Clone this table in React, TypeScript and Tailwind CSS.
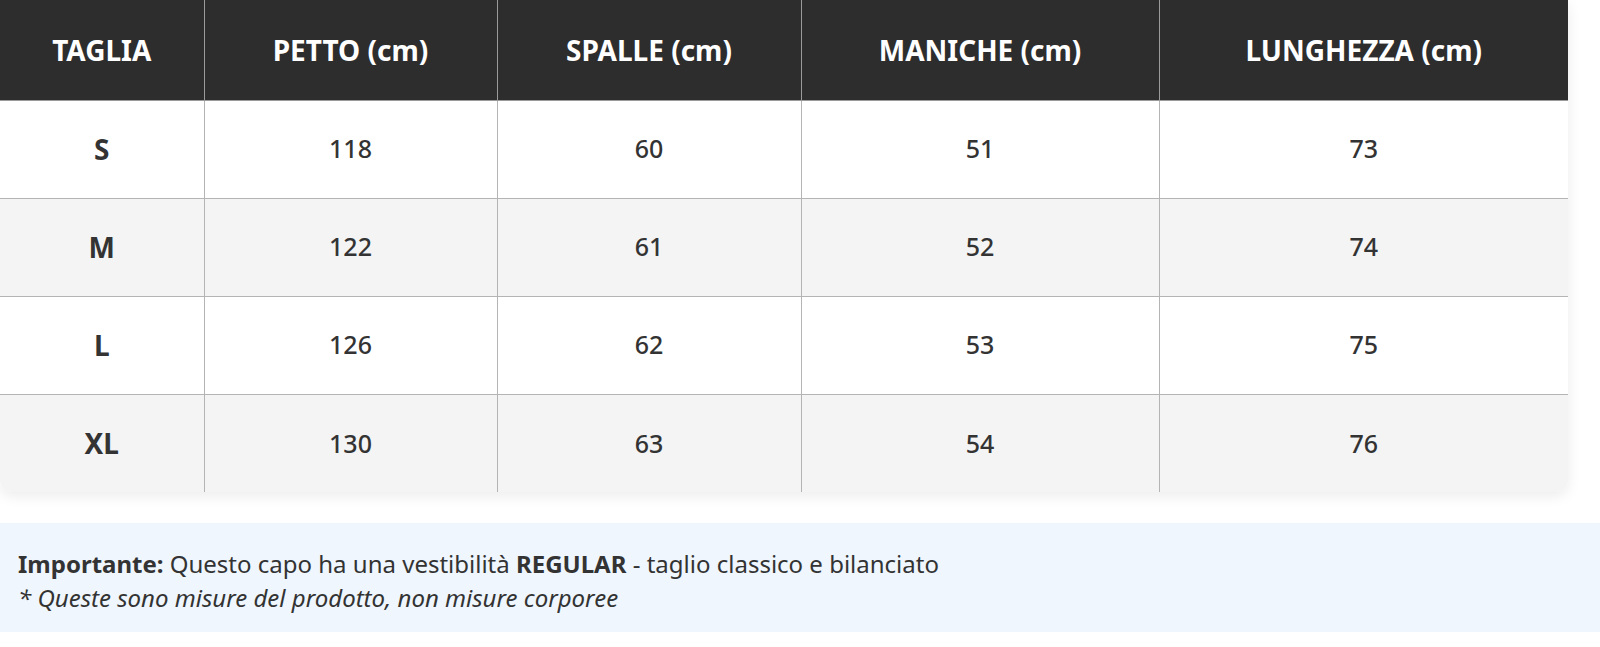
const headers = ["TAGLIA", "PETTO (cm)", "SPALLE (cm)", "MANICHE (cm)", "LUNGHEZZA (cm)"];

const rows = [
  ["S", "118", "60", "51", "73"],
  ["M", "122", "61", "52", "74"],
  ["L", "126", "62", "53", "75"],
  ["XL", "130", "63", "54", "76"],
];

const widths = ["w-[204px]", "w-[293px]", "w-[304px]", "w-[358px]", "w-[409px]"];

export default function App() {
  return (
    <div className="w-[1600px] min-h-[647px] bg-white text-[#333] font-['Noto_Sans','Open_Sans',sans-serif]">
      <div className="w-[1568px] rounded-b-xl overflow-hidden shadow-[0_4px_14px_rgba(0,0,0,0.08)]">
        <table className="w-full border-collapse table-fixed">
          <thead>
            <tr className="bg-[#2d2d2d] h-[100px]">
              {headers.map((h, i) => (
                <th
                  key={h}
                  className={`${widths[i]} text-white text-[28px] font-bold text-center ${i > 0 ? "border-l border-[#9a9a9a]" : ""} border-b border-[#9a9a9a]`}
                >
                  {h}
                </th>
              ))}
            </tr>
          </thead>
          <tbody>
            {rows.map((r, ri) => (
              <tr key={r[0]} className={`h-[98px] ${ri % 2 === 1 ? "bg-[#f4f4f4]" : "bg-white"}`}>
                {r.map((c, ci) => (
                  <td
                    key={ci}
                    className={`text-center ${ci === 0 ? "font-bold text-[28px]" : "font-medium text-[25px]"} ${ci > 0 ? "border-l border-[#b4b4b4]" : ""} ${ri < rows.length - 1 ? "border-b border-[#b4b4b4]" : ""}`}
                  >
                    {c}
                  </td>
                ))}
              </tr>
            ))}
          </tbody>
        </table>
      </div>
      <div className="mt-[31px] bg-[#eff6fd] pl-[18px] pt-[24px] pb-[17px] text-[24px] leading-[34px] text-[#333]">
        <p>
          <strong className="font-bold">Importante:</strong> Questo capo ha una vestibilità{" "}
          <strong className="font-bold">REGULAR</strong> - taglio classico e bilanciato
        </p>
        <p className="italic">* Queste sono misure del prodotto, non misure corporee</p>
      </div>
    </div>
  );
}
